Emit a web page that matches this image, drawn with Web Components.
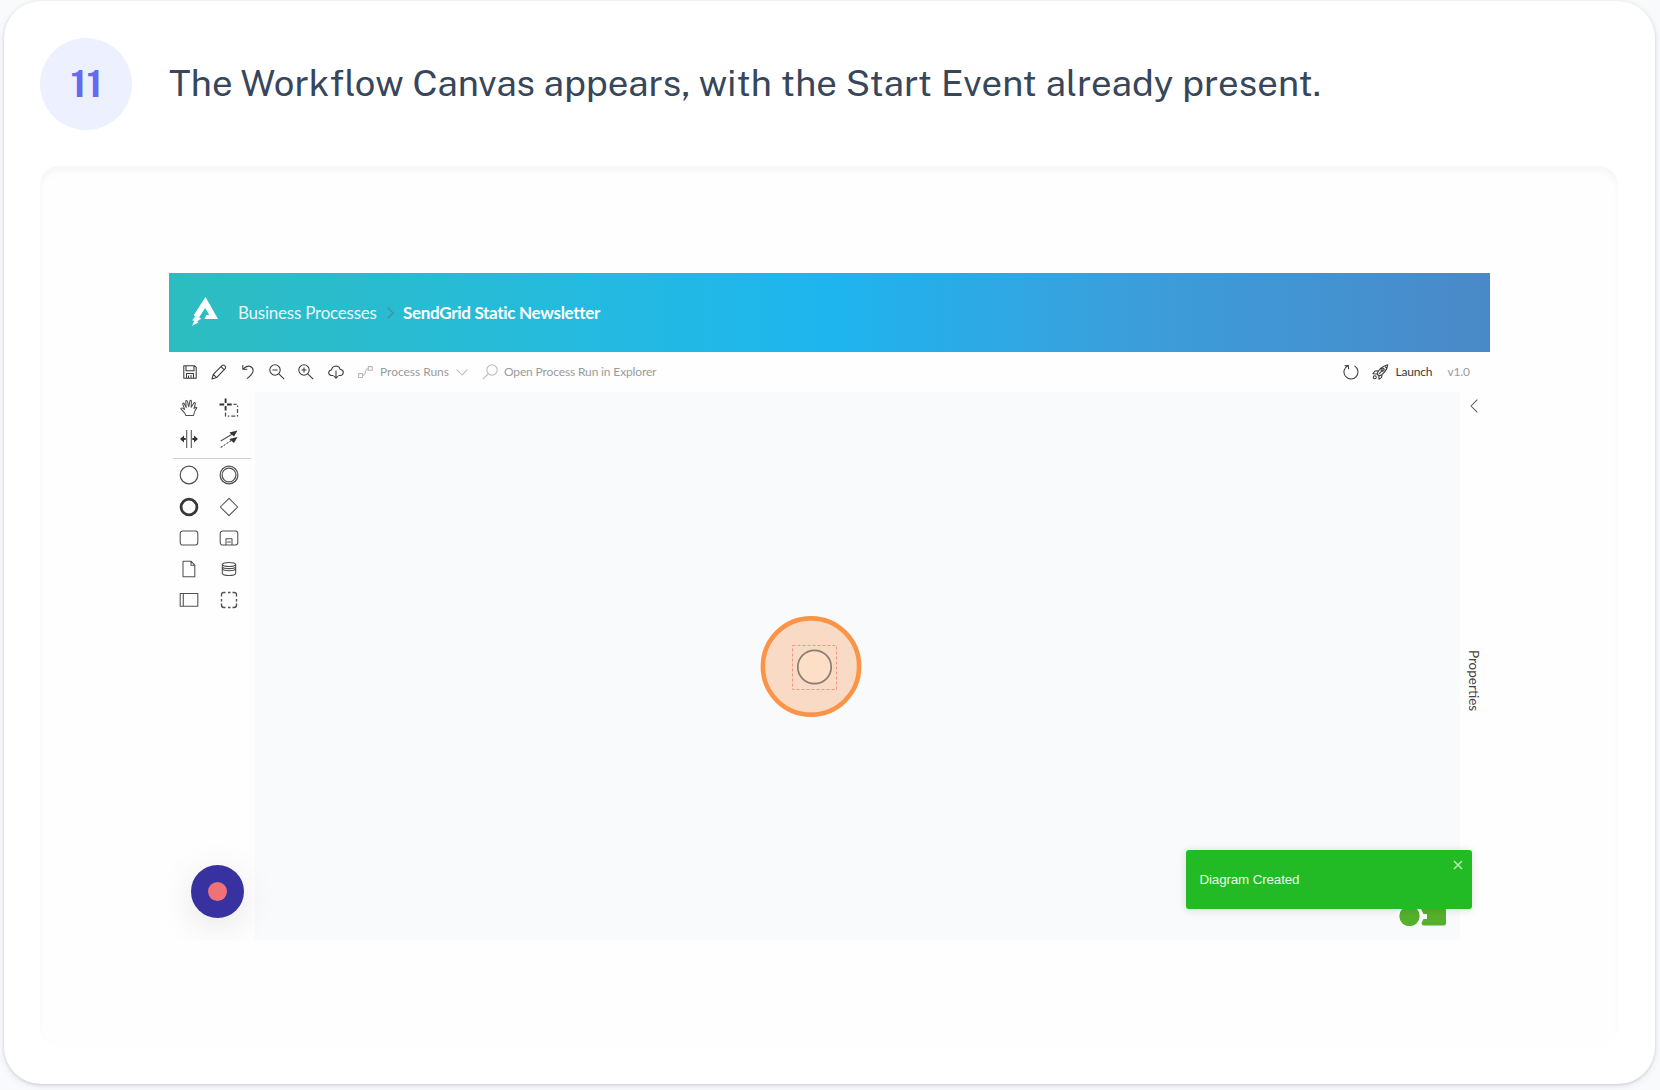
<!DOCTYPE html>
<html lang="en">
<head>
<meta charset="utf-8">
<title>Workflow step</title>
<style>
html,body{margin:0;height:100%;overflow:hidden;background:#f8fafc}
</style>
</head>
<body>
<step-card number="11">
  <fit-text slot="title" width="1151">The Workflow Canvas appears, with the Start Event already present.</fit-text>
  <workflow-app></workflow-app>
</step-card>
<script>
const shadow = (el, html) => { el.attachShadow({mode:'open'}).innerHTML = html; };

/* Text run whose tracking is tuned so that it spans a given width. */
class FitText extends HTMLElement {
  connectedCallback() {
    if (!this.shadowRoot) shadow(this, '<style>:host{display:block;flex:none;white-space:nowrap}span{display:inline-block}</style><span><slot></slot></span>');
    const span = this.shadowRoot.querySelector('span');
    const width = +this.getAttribute('width');
    const tune = () => {
      span.style.letterSpacing = '0px';
      const natural = span.offsetWidth ? parseFloat(getComputedStyle(span).width) : width;
      span.style.letterSpacing = ((width - natural) / (this.textContent.length - 1)) + 'px';
      this.style.width = width + 'px';
    };
    tune();
  }
}

const ICONS = {
  save:['0 0 14 14','<path d="M.8.8h10.8l1.6 1.6v10.8H.8zM3 .8v5h8v-5M3.500 13V8.500h7V13M5.500 13v-2.500M8 10v3"/>'],
  pencil:['0 0 16 16','<path d="M1 15l1.300-4.700L11 1.600q1.300-1.200 2.800.2t.3 2.900L5.600 13.600zM2.300 10.300l3.300 3.300M10 2.600l3.300 3.300"/>'],
  undo:['0 0 12 16','<path d="M.8 1v4.200h4.400M1 5Q4.500 1.500 8 2.300 12 3.800 10.800 8 9.700 11 5 14.700"/>'],
  zoomout:['0 0 16 16','<circle cx="6" cy="6" r="5.200"/><path d="M9.800 9.800l5.400 5.400M3.500 6h5"/>'],
  zoomin:['0 0 16 16','<circle cx="6" cy="6" r="5.200"/><path d="M9.800 9.800l5.400 5.400M3.500 6h5M6 3.500v5"/>'],
  cloud:['0 0 16 14','<path d="M5.500 10.500H3.600Q.7 10.300.7 7.800.8 5.300 3.500 5 4.200 1.300 7.800 1q3.500.1 4.300 3.300 3.200.5 3.200 3.200-.2 3-3.200 3h-1.600M8 5.500v7.500M5.800 11L8 13.200 10.200 11"/>'],
  flow:['0 0 15 12','<path d="M.6 7.600h4v3.800h-4zM10.300.6h4v3.600h-4zM4.600 9.500Q7 9.500 7.500 6T10.300 2.500"/>'],
  down:['0 0 12 7','<path d="M.7.7L6 6l5.300-5.300"/>'],
  right:['0 0 7 12','<path d="M.7.7L6.200 6 .7 11.300"/>'],
  left:['0 0 8 14','<path d="M7.300.7L1 7l6.300 6.300"/>'],
  search:['0 0 16 16','<circle cx="10" cy="6" r="5.200"/><path d="M6.200 9.800L.8 15.200"/>'],
  refresh:['0 0 16 16','<path d="M11.500 1.900A7 7 0 1 1 4.800 1.700M1.600 1.800l3.700-.4.300 3.700"/>'],
  rocket:['0 0 17 16','<path d="M5 10Q7.500 3 15.800.8 14.500 8.500 7.200 12zM6.200 6.700L3 7 .9 9.700l3.900.2M10 10.300l-.3 3L7 15.300l-.2-3.400M7 9.800l4.300-4.400M5 10l2.200 2M13 2.500l1.700 1.500"/><circle cx="10.600" cy="5.700" r="1.600"/><circle cx="2.800" cy="13.200" r="1.500"/>'],
  close:['0 0 10 10','<path stroke-width="1.500" d="M1 1l8 8M9 1L1 9"/>'],
  hand:['0 0 18 18','<path d="M5.700 16.500Q5.500 14.800 3.900 13L1 10.200Q.6 8.900 2 8.900l2.600 1.500L2.700 5Q2.800 3.700 4 4.300L6.200 8.500 5.700 2.300Q6.300 1 7.300 2L8.700 7.800 9.900 1.900Q10.700.8 11.400 2L11.200 8.300 14 3.800Q15.200 3.200 15.400 4.500L14 9.500 15.700 8.300Q17 8 16.700 9.200 14.600 11.800 14.200 14L13.600 16.500z"/>'],
  lasso:['0 0 20 20','<path stroke="#333" stroke-width="1.900" d="M.5 6.500h4.700M8 6.500h4.700M6.600.5v4.500M6.600 8v4.500"/><path stroke-width="1.300" stroke-dasharray="4 2 1.500 2" d="M6.500 14.500v3.700h12V6.300h-4"/>'],
  space:['0 0 18 18','<path d="M6.700 0v18M11.300 0v18"/><path fill="#333" stroke="none" d="M0 9l4-3.500v2.400h1.700v2.200H4v2.400zM18 9l-4-3.500v2.400h-1.700v2.200H14v2.400z"/>'],
  connect:['0 0 18 18','<path d="M.7 11L12 4.300"/><path stroke-dasharray="2.200 1.300" d="M.7 17.500L12 10"/><path fill="#333" stroke="none" d="M17.500.5L14 6.500 9.300 2.600zM17.500 7L14 13 9.300 9.100z"/>'],
  start:['0 0 20 20','<circle cx="10" cy="10" r="8.800" stroke-width="1.200"/>'],
  inter:['0 0 20 20','<circle cx="10" cy="10" r="8.900" stroke-width="1.200"/><circle cx="10" cy="10" r="6.900" stroke-width="1.200"/>'],
  end:['0 0 20 20','<circle cx="10" cy="10" r="7.900" stroke="#383838" stroke-width="2.800"/>'],
  gate:['0 0 20 20','<path d="M10 1.300L18.700 10 10 18.700 1.300 10z"/>'],
  task:['0 0 20 20','<rect x="1.200" y="3" width="17.600" height="14" rx="2.500"/>'],
  sub:['0 0 20 20','<rect x="1.200" y="3" width="17.600" height="14" rx="2.500"/><path d="M7 17v-6.200h6V17M8.200 13.900h3.600"/>'],
  data:['0 0 20 20','<path d="M4 2.300h8.200l3.600 3.800v11.600H4zM12 2.300v4h3.800"/>'],
  store:['0 0 20 20','<path d="M3.300 5.500v9Q4 16.500 10 16.500t6.700-2v-9M3.300 5.500Q4 3.500 10 3.500t6.700 2Q16 7.500 10 7.500T3.300 5.500M3.300 7.700Q4 9.600 10 9.600t6.700-1.900M3.300 9.800q.7 1.900 6.700 1.900t6.700-1.900"/>'],
  pool:['0 0 20 20','<path d="M1.200 3.500h17.600v12.700H1.200zM4.300 3.500v12.700"/>'],
  group:['0 0 20 20','<path stroke-width="1.400" d="M6.500 2.500H5Q2.500 2.500 2.500 5v1.500M2.500 13.500V15q0 2.500 2.500 2.500h1.500M13.500 17.500H15q2.500 0 2.500-2.500v-1.500M17.500 6.500V5q0-2.500-2.500-2.500h-1.500M9 2.500h2.500M9 17.500h2.500M2.500 9v2.500M17.500 9v2.500"/>']
};
class UiIcon extends HTMLElement {
  connectedCallback() {
    const [box, body] = ICONS[this.getAttribute('name')];
    const [, , w, h] = box.split(' ');
    shadow(this, `<style>:host{display:block;flex:none;width:${w}px;height:${h}px}svg{display:block}</style>
    <svg width="${w}" height="${h}" viewBox="${box}" fill="none" stroke="currentColor" stroke-width="1.05" stroke-linejoin="round">${body}</svg>`);
  }
}

class StepCard extends HTMLElement {
  connectedCallback() {
    shadow(this, `<style>
    :host{display:flex;flex-direction:column;box-sizing:border-box;width:1651px;height:1083px;margin:1px 0 0 4px;padding:37px 37px 36px 36.400px;border-radius:37px;background:#fff;box-shadow:0 1px 3px rgba(15,23,60,.15),0 2px 9px rgba(15,23,60,.08)}
    header{display:flex;align-items:center;height:92px;gap:37px;margin-bottom:36px}
    .n{display:flex;align-items:center;justify-content:center;width:92px;height:92px;border-radius:50%;background:#edf1ff;color:#656af0;font:700 37px/92px "Public Sans",Roboto,sans-serif}
    .n span{margin-top:-1px}
    .t{color:#37465a;font:400 36.500px/46px "Public Sans",Inter,sans-serif;margin:-2px 0 0 -.4px}
    main{box-sizing:border-box;height:881px;padding:107px 0 0 128.600px;border-radius:19px;background:#fefefe;box-shadow:inset 0 6px 8px -2px rgba(0,0,0,.045)}
    </style><header><div class="n"><span>${this.getAttribute('number')}</span></div><div class="t"><slot name="title"></slot></div></header><main><slot></slot></main>`);
  }
}

class AppHeader extends HTMLElement {
  connectedCallback() {
    shadow(this, `<style>
    :host{display:flex;align-items:center;box-sizing:border-box;height:79px;padding-left:22px;background:linear-gradient(90deg,#2dbdc0 0%,#25badd 30%,#1eb5ef 50%,#3b9edb 73%,#4a89c8 100%);color:#fff;font:400 17px/22px Lato,sans-serif}
    .logo{flex:none;margin:0 19px 2px 0}
    .link{color:#e5f8fa}
    ui-icon{color:#42899f;margin:0 9px 0 10px}
    .cur{font-weight:700}
    </style>
    <svg class="logo" width="28" height="31" viewBox="0 0 28 31"><path fill="#fff" d="M14.500 1L27 23H13.300l2.200-4h2.700L14.200 12 8 21.500l2.300 1-4.200 3 1.200 1L1 30l2.200-5-2-.700 3-4-1.500-1z"/></svg>
    <fit-text class="link" width="139">Business Processes</fit-text><ui-icon name="right"></ui-icon><fit-text class="cur" width="197">SendGrid Static Newsletter</fit-text>`);
  }
}

class AppToolbar extends HTMLElement {
  connectedCallback() {
    shadow(this, `<style>
    :host{display:flex;align-items:center;justify-content:space-between;box-sizing:border-box;height:40px;padding:0 20px 0 14px;color:#3a3a3a;font:400 12px/16px Lato,sans-serif}
    div{display:flex;align-items:center}
    fit-text{margin-top:-1px}
    .tools{gap:14px}
    .off{color:#b8b8b8;margin-left:14px}.off fit-text,.v{color:#9b9b9b}
    </style>
    <div><div class="tools"><ui-icon name="save"></ui-icon><ui-icon name="pencil"></ui-icon><ui-icon name="undo" style="margin-left:1px"></ui-icon><ui-icon name="zoomout" style="margin-left:1px"></ui-icon><ui-icon name="zoomin" style="margin-left:-.5px"></ui-icon><ui-icon name="cloud" style="margin-left:-.5px"></ui-icon></div>
    <div class="off"><ui-icon name="flow"></ui-icon><fit-text width="69" style="margin:-1px 7px 0 7px">Process Runs</fit-text><ui-icon name="down"></ui-icon></div>
    <div class="off"><ui-icon name="search"></ui-icon><fit-text width="152.500" style="margin-left:6px">Open Process Run in Explorer</fit-text></div></div>
    <div><ui-icon name="refresh"></ui-icon><ui-icon name="rocket" style="margin:0 6px 0 13px"></ui-icon><fit-text width="37">Launch</fit-text><fit-text class="v" width="22.500" style="margin-left:15px">v1.0</fit-text></div>`);
  }
}

class ToolPalette extends HTMLElement {
  connectedCallback() {
    const row = (a, b) => `<div class="r"><span><ui-icon name="${a}"></ui-icon></span><span><ui-icon name="${b}"></ui-icon></span></div>`;
    shadow(this, `<style>
    :host{display:flex;flex-direction:column;flex:none;box-sizing:border-box;width:86px;height:548px;color:#505050}
    .r{display:flex;height:31.200px}
    span{display:flex;align-items:center;justify-content:center;width:40.500px}
    span+span{width:39.500px}
    hr{width:78px;height:1px;border:0;margin:4px 0 .5px 4px;background:#d0d0d0}
    .rec{display:flex;align-items:center;justify-content:center;width:53px;height:53px;border-radius:50%;background:#3832a0;margin:auto 0 22px 22px;box-shadow:0 8px 36px rgba(0,0,0,.1)}
    .rec i{width:19px;height:19px;border-radius:50%;background:#f07178}
    </style>
    ${row('hand','lasso')}${row('space','connect')}<hr>${row('start','inter')}${row('end','gate')}${row('task','sub')}${row('data','store')}${row('pool','group')}
    <div class="rec"><i></i></div>`);
  }
}

class DiagramCanvas extends HTMLElement {
  connectedCallback() {
    shadow(this, `<style>
    :host{display:block;flex:none;position:relative;width:1205px;height:548px;background:#f9fafc}
    .start{position:absolute;left:505px;top:223px}
    .mark{position:absolute;right:13px;bottom:14px}
    </style>
    <svg class="start" width="102" height="102" viewBox="0 0 102 102" fill="none"><circle cx="51" cy="51.500" r="48.100" fill="#f9dbc5" stroke="#fb9447" stroke-width="4.600"/><path d="M32.500 30.500h44v44h-44z" stroke="#f3987f" stroke-width="1" stroke-dasharray="3 2"/><circle cx="54.500" cy="52" r="16.700" fill="#fddec7" stroke="#8d7b70" stroke-width="1.700"/></svg>
    <svg class="mark" width="50" height="26" viewBox="0 0 50 26"><path fill="#fff" d="M0 9h27v7H0z"/><circle cx="12.500" cy="16" r="10.200" fill="#55b12b"/><path fill="#55b12b" d="M26 4h23v19.500q0 2-2 2H26.500q-2-.5-2-2.500l2-4h3.500v-5h-3.500L24 9z"/></svg>`);
  }
}

class PropertiesRail extends HTMLElement {
  connectedCallback() {
    shadow(this, `<style>
    :host{display:flex;flex-direction:column;align-items:center;box-sizing:border-box;width:30px;height:548px;padding-top:7px;color:#444;font:400 13.500px/18px Lato,sans-serif}
    .v{writing-mode:vertical-rl;margin:237px 1px 0 0;height:61px}
    ui-icon{color:#555;margin-right:1px}
    </style><ui-icon name="left"></ui-icon><div class="v">Properties</div>`);
  }
}

class ToastMessage extends HTMLElement {
  connectedCallback() {
    shadow(this, `<style>
    :host{display:flex;align-items:center;justify-content:space-between;box-sizing:border-box;width:286px;height:59px;padding:0 9.500px 0 13px;border-radius:3px;background:#22bb26;color:#e7fae7;font:400 13.400px/18px "Liberation Sans",Arial,sans-serif;box-shadow:0 1px 10px rgba(0,0,0,.13)}
    ui-icon{align-self:flex-start;margin-top:10px;color:#b6ebb7}
    </style><fit-text width="100">Diagram Created</fit-text><ui-icon name="close"></ui-icon>`);
  }
}

class WorkflowApp extends HTMLElement {
  connectedCallback() {
    shadow(this, `<style>
    :host{display:block;position:relative;overflow:hidden;width:1321px;height:667px}
    .body{display:flex}
    tool-palette{position:relative;z-index:1}
    toast-message{position:absolute;right:17.500px;bottom:31px;z-index:2}
    </style><app-header></app-header><app-toolbar></app-toolbar><div class="body"><tool-palette></tool-palette><diagram-canvas></diagram-canvas><properties-rail></properties-rail></div><toast-message></toast-message>`);
  }
}

Object.entries({'step-card':StepCard,'workflow-app':WorkflowApp,'app-header':AppHeader,'app-toolbar':AppToolbar,'tool-palette':ToolPalette,'diagram-canvas':DiagramCanvas,'properties-rail':PropertiesRail,'toast-message':ToastMessage,'ui-icon':UiIcon,'fit-text':FitText}).forEach(([n, c]) => customElements.define(n, c));
</script>
</body>
</html>
